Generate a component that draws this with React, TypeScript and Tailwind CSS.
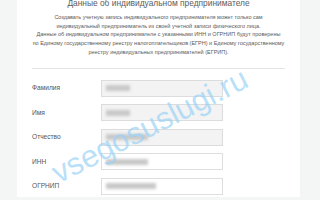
const fields = [
  { label: 'Фамилия', disabled: true, blur: 24 },
  { label: 'Имя', disabled: true, blur: 24 },
  { label: 'Отчество', disabled: true, blur: 42 },
  { label: 'ИНН', disabled: false, blur: 42 },
  { label: 'ОГРНИП', disabled: false, blur: 50 },
]

const intro = [
  'Создавать учетную запись индивидуального предпринимателя может только сам',
  'индивидуальный предприниматель из своей учетной записи физического лица.',
  'Данные об индивидуальном предпринимателе с указанными ИНН и ОГРНИП будут проверены',
  'по Единому государственному реестру налогоплательщиков (ЕГРН) и Единому государственному',
  'реестру индивидуальных предпринимателей (ЕГРИП).',
]

export default function App() {
  return (
    <div
      className="relative h-[200px] w-[320px] overflow-hidden bg-[#f4f5f5]"
      style={{ fontFamily: '"Liberation Sans", Arial, sans-serif' }}
    >
      <div className="ml-[17px] h-full w-[283px] bg-white">
        <h1 className="-mt-[3px] text-center text-[8.4px] font-normal leading-[12px] text-[#5c5c5c]">
          Данные об индивидуальном предпринимателе
        </h1>
        <div className="mt-[4px] text-center text-[5.5px] leading-[8.7px] text-[#5a5a5a]">
          {intro.map((line) => (
            <p key={line} className="whitespace-nowrap">
              {line}
            </p>
          ))}
        </div>
        <div className="mx-[15px] mt-[11px] h-px bg-[#e4e4e4]" />
        <div className="mt-[11px] flex flex-col gap-[7.5px] pl-[15px]">
          {fields.map((f) => (
            <div key={f.label} className="flex h-[17px] items-center">
              <span className="w-[69px] text-[6.6px] text-[#555]">{f.label}</span>
              <div
                className={`flex h-[17px] w-[122px] items-center border px-[4px] ${
                  f.disabled ? 'border-[#dcdcdc] bg-[#f3f3f3]' : 'border-[#dedede] bg-white'
                }`}
              >
                <div
                  className="h-[6px] bg-[#c8c8c8] blur-[1.5px]"
                  style={{ width: f.blur }}
                />
              </div>
            </div>
          ))}
        </div>
      </div>
      <div className="pointer-events-none absolute left-[42px] top-[110px] origin-center -rotate-[27deg] text-[31px] leading-none text-[#9ad2f7]/70">
        vsegosuslugi.ru
      </div>
    </div>
  )
}
